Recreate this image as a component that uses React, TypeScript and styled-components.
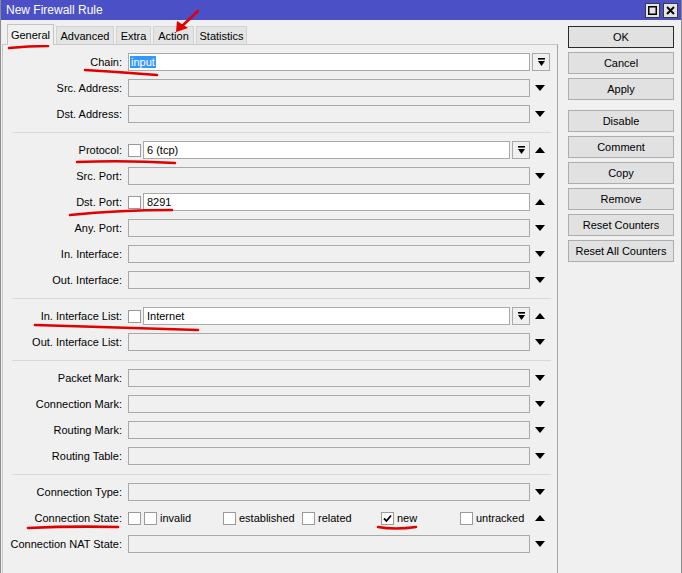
import { FC } from 'react'
import styled, { createGlobalStyle } from 'styled-components'

const GlobalStyle = createGlobalStyle`
  html, body {
    margin: 0;
    padding: 0;
    background: #f0f0f0;
  }
  body {
    font-family: 'Liberation Sans', Arial, sans-serif;
    font-size: 11px;
    color: #000;
  }
`

const Window = styled.div`
  position: relative;
  width: 682px;
  height: 573px;
  overflow: hidden;
  box-sizing: border-box;
  background: #f0f0f0;
  border-left: 1px solid #8c8c8c;
  border-right: 1px solid #8c8c8c;
`

const TitleBar = styled.div`
  height: 20px;
  margin: 0 -1px;
  padding: 0 4px 0 6px;
  display: flex;
  align-items: center;
  justify-content: space-between;
  background: #4b50c7;
  color: #fff;
  font-size: 12px;
`

const TitleButtons = styled.div`
  display: flex;
  gap: 3px;
`

const TitleButton = styled.div`
  width: 15px;
  height: 15px;
  box-sizing: border-box;
  border: 1px solid #3a3a3a;
  background: #e4e4e4;
  display: flex;
  align-items: center;
  justify-content: center;
  color: #000;
`

const Body = styled.div`
  display: flex;
  height: 553px;
`

const LeftPane = styled.div`
  width: 556px;
  padding-left: 1px;
  display: flex;
  flex-direction: column;
`

const Tabs = styled.div`
  height: 24px;
  display: flex;
  align-items: flex-end;
  gap: 2px;
  padding-left: 5px;
`

const Tab = styled.div<{ $active?: boolean; $width: number }>`
  width: ${(p) => p.$width}px;
  height: ${(p) => (p.$active ? 21 : 18)}px;
  box-sizing: border-box;
  display: flex;
  align-items: center;
  justify-content: center;
  border: 1px solid ${(p) => (p.$active ? '#c4c4c4' : '#d2d2d2')};
  border-bottom: none;
  background: ${(p) => (p.$active ? '#f0f0f0' : '#e4e4e4')};
  position: relative;
  z-index: ${(p) => (p.$active ? 1 : 0)};
  margin-bottom: ${(p) => (p.$active ? -1 : 0)}px;
  font-size: 11px;
`

const Panel = styled.div`
  flex: 1;
  border-top: 1px solid #c8c8c8;
  border-left: 1px solid #c8c8c8;
  border-right: 1px solid #a4a4a4;
  padding-top: 4px;
`

const Row = styled.div`
  display: grid;
  grid-template-columns: 125px 402px 27px;
  height: 26px;
  align-items: center;
`

const Label = styled.div`
  text-align: right;
  padding-right: 6px;
  white-space: nowrap;
`

const Content = styled.div<{ $span?: boolean }>`
  display: flex;
  align-items: center;
  gap: 2px;
  grid-column: ${(p) => (p.$span ? '2 / 4' : 'auto')};
  padding-right: ${(p) => (p.$span ? 7 : 0)}px;
`

const Field = styled.div<{ $active?: boolean }>`
  flex: 1;
  height: 18px;
  box-sizing: border-box;
  border: 1px solid #a9a9a9;
  background: ${(p) => (p.$active ? '#fff' : '#f0f0f0')};
  display: flex;
  align-items: center;
  padding-left: 3px;
`

const Selected = styled.span`
  background: #3399ff;
  color: #fff;
  padding: 0 1px;
  margin-left: -2px;
`

const DropButton = styled.div`
  width: 18px;
  height: 18px;
  box-sizing: border-box;
  border: 1px solid #a9a9a9;
  background: #f0f0f0;
  display: flex;
  align-items: center;
  justify-content: center;
`

const Box = styled.div`
  width: 13px;
  height: 13px;
  box-sizing: border-box;
  border: 1px solid #9a9a9a;
  background: #fff;
  flex: none;
  display: flex;
  align-items: center;
  justify-content: center;
`

const ArrowCell = styled.div`
  display: flex;
  align-items: center;
  padding-left: 5px;
`

const Triangle = styled.div<{ $up?: boolean }>`
  width: 0;
  height: 0;
  border-left: 5px solid transparent;
  border-right: 5px solid transparent;
  ${(p) => (p.$up ? 'border-bottom: 6px solid #000;' : 'border-top: 6px solid #000;')}
`

const Separator = styled.div`
  height: 10px;
  display: flex;
  align-items: center;
  padding: 0 6px 0 9px;
  &::after {
    content: '';
    flex: 1;
    height: 1px;
    background: #d8d8d8;
  }
`

const States = styled.div`
  display: flex;
  align-items: center;
  margin-left: 1px;
`

const StateItem = styled.label`
  width: 79px;
  display: flex;
  align-items: center;
  gap: 3px;
`

const ButtonColumn = styled.div`
  padding: 6px 0 0 10px;
  display: flex;
  flex-direction: column;
  gap: 4px;
`

const Button = styled.div<{ $default?: boolean; $spaced?: boolean }>`
  width: 106px;
  height: 22px;
  box-sizing: border-box;
  border: 1px solid ${(p) => (p.$default ? '#2a2a2a' : '#adadad')};
  background: #e1e1e1;
  display: flex;
  align-items: center;
  justify-content: center;
  margin-top: ${(p) => (p.$spaced ? 6 : 0)}px;
`

const Marks = styled.svg`
  position: absolute;
  left: -1px;
  top: 0;
  pointer-events: none;
`

const DropIcon = () => (
  <svg width='9' height='9' viewBox='0 0 9 9'>
    <rect x='1' y='0' width='7' height='1.6' fill='#000' />
    <polygon points='1,3 8,3 4.5,8' fill='#000' />
  </svg>
)

const Check = () => (
  <svg width='11' height='11' viewBox='0 0 11 11'>
    <path d='M2 5.5 L4.5 8 L9 2.5' stroke='#000' strokeWidth='1.8' fill='none' />
  </svg>
)

type RowSpec = {
  label: string
  value?: string
  active?: boolean
  box?: boolean
  drop?: boolean
  arrow?: 'up' | 'down' | null
}

const FieldRow: FC<RowSpec> = ({ label, value, active, box, drop, arrow = 'down' }) => (
  <Row>
    <Label>{label}:</Label>
    <Content $span={arrow === null}>
      {box && <Box />}
      <Field $active={active}>{value}</Field>
      {drop && (
        <DropButton>
          <DropIcon />
        </DropButton>
      )}
    </Content>
    {arrow && (
      <ArrowCell>
        <Triangle $up={arrow === 'up'} />
      </ArrowCell>
    )}
  </Row>
)

const tabs = [
  { name: 'General', width: 47 },
  { name: 'Advanced', width: 58 },
  { name: 'Extra', width: 35 },
  { name: 'Action', width: 41 },
  { name: 'Statistics', width: 51 },
]

const buttons = [
  'OK',
  'Cancel',
  'Apply',
  'Disable',
  'Comment',
  'Copy',
  'Remove',
  'Reset Counters',
  'Reset All Counters',
]

const states = [
  { name: 'invalid', on: false },
  { name: 'established', on: false },
  { name: 'related', on: false },
  { name: 'new', on: true },
  { name: 'untracked', on: false },
]

const App = () => {
  return (
    <>
      <GlobalStyle />
      <Window>
        <TitleBar>
          <span>New Firewall Rule</span>
          <TitleButtons>
            <TitleButton>
              <svg width='9' height='9' viewBox='0 0 9 9'>
                <rect x='0.75' y='0.75' width='7.5' height='7.5' stroke='#000' strokeWidth='1.5' fill='none' />
              </svg>
            </TitleButton>
            <TitleButton>
              <svg width='9' height='9' viewBox='0 0 9 9'>
                <path d='M1 1 L8 8 M8 1 L1 8' stroke='#000' strokeWidth='1.8' />
              </svg>
            </TitleButton>
          </TitleButtons>
        </TitleBar>
        <Body>
          <LeftPane>
            <Tabs>
              {tabs.map((t, i) => (
                <Tab key={t.name} $active={i === 0} $width={t.width}>
                  {t.name}
                </Tab>
              ))}
            </Tabs>
            <Panel>
              <Row>
                <Label>Chain:</Label>
                <Content $span>
                  <Field $active>
                    <Selected>input</Selected>
                  </Field>
                  <DropButton>
                    <DropIcon />
                  </DropButton>
                </Content>
              </Row>
              <FieldRow label='Src. Address' />
              <FieldRow label='Dst. Address' />
              <Separator />
              <FieldRow label='Protocol' value='6 (tcp)' active box drop arrow='up' />
              <FieldRow label='Src. Port' />
              <FieldRow label='Dst. Port' value='8291' active box arrow='up' />
              <FieldRow label='Any. Port' />
              <FieldRow label='In. Interface' />
              <FieldRow label='Out. Interface' />
              <Separator />
              <FieldRow label='In. Interface List' value='Internet' active box drop arrow='up' />
              <FieldRow label='Out. Interface List' />
              <Separator />
              <FieldRow label='Packet Mark' />
              <FieldRow label='Connection Mark' />
              <FieldRow label='Routing Mark' />
              <FieldRow label='Routing Table' />
              <Separator />
              <FieldRow label='Connection Type' />
              <Row>
                <Label>Connection State:</Label>
                <Content>
                  <Box />
                  <States>
                    {states.map((s) => (
                      <StateItem key={s.name}>
                        <Box>{s.on && <Check />}</Box>
                        {s.name}
                      </StateItem>
                    ))}
                  </States>
                </Content>
                <ArrowCell>
                  <Triangle $up />
                </ArrowCell>
              </Row>
              <FieldRow label='Connection NAT State' />
            </Panel>
          </LeftPane>
          <ButtonColumn>
            {buttons.map((b) => (
              <Button key={b} $default={b === 'OK'} $spaced={b === 'Disable'}>
                {b}
              </Button>
            ))}
          </ButtonColumn>
        </Body>
        <Marks width='682' height='573' viewBox='0 0 682 573'>
          <g stroke='#e00000' strokeWidth='2.6' fill='none' strokeLinecap='round'>
            <path d='M9 48 Q28 46 48 46' />
            <path d='M198 11 L181 27' />
            <path d='M85 70 Q120 72 157 75' />
            <path d='M77 162 Q125 160 175 163' />
            <path d='M70 215 Q120 210 172 210' />
            <path d='M35 325 Q110 327 198 330' />
            <path d='M28 528 Q70 526 118 527' />
            <path d='M378 527 Q395 530 416 527' />
          </g>
          <polygon points='176,32 177,21 188,28' fill='#e00000' />
        </Marks>
      </Window>
    </>
  )
}

export default App
